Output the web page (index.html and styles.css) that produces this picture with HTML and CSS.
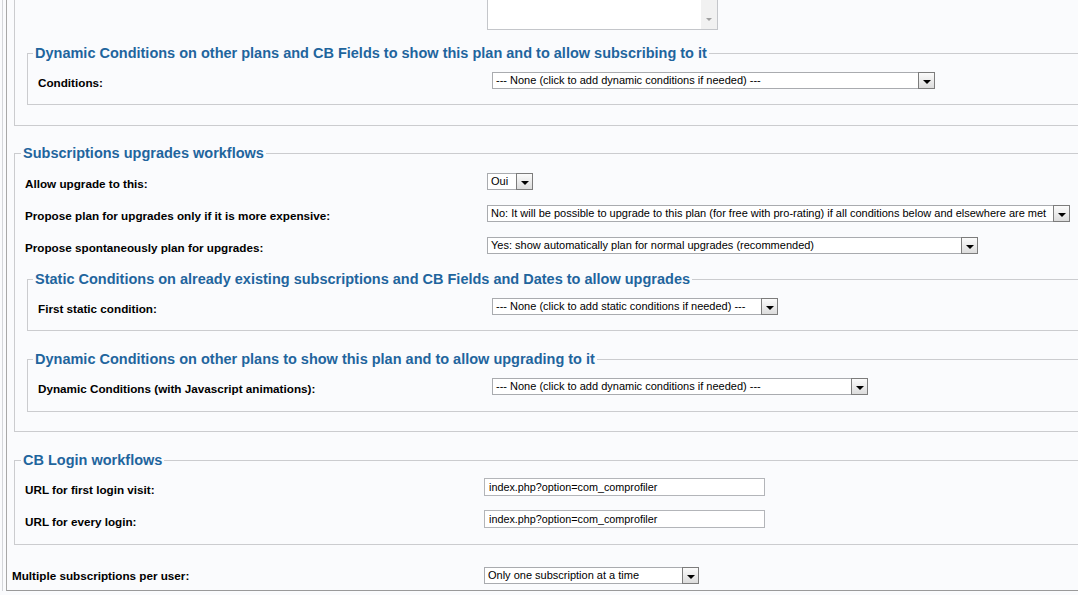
FILE: index.html
```html
<!DOCTYPE html>
<html>
<head>
<meta charset="utf-8">
<title>Plan settings</title>
<link rel="stylesheet" href="styles.css">
</head>
<body>
<div class="frame">
  <div class="panel">

    <fieldset class="fs fs-outer fs-cut">
      <div class="row row-outer row-ta">
        <div class="label"></div>
        <div class="ctrl">
          <div class="textarea"><span class="ta-scroll"><span class="ta-arrow"></span></span></div>
        </div>
      </div>
      <fieldset class="fs fs-inner fs-first">
        <legend>Dynamic Conditions on other plans and CB Fields to show this plan and to allow subscribing to it</legend>
        <div class="row row-inner">
          <label class="label">Conditions:</label>
          <div class="ctrl"><div class="select w-cond"><span class="val">--- None (click to add dynamic conditions if needed) ---</span><span class="btn"></span></div></div>
        </div>
      </fieldset>
    </fieldset>

    <fieldset class="fs fs-outer fs-upg">
      <legend>Subscriptions upgrades workflows</legend>
      <div class="rows">
        <div class="row row-outer">
          <label class="label">Allow upgrade to this:</label>
          <div class="ctrl"><div class="select w-oui"><span class="val">Oui</span><span class="btn"></span></div></div>
        </div>
        <div class="row row-outer">
          <label class="label">Propose plan for upgrades only if it is more expensive:</label>
          <div class="ctrl"><div class="select w-only"><span class="val">No: It will be possible to upgrade to this plan (for free with pro-rating) if all conditions below and elsewhere are met</span><span class="btn"></span></div></div>
        </div>
        <div class="row row-outer">
          <label class="label">Propose spontaneously plan for upgrades:</label>
          <div class="ctrl"><div class="select w-spont"><span class="val">Yes: show automatically plan for normal upgrades (recommended)</span><span class="btn"></span></div></div>
        </div>
      </div>
      <fieldset class="fs fs-inner">
        <legend>Static Conditions on already existing subscriptions and CB Fields and Dates to allow upgrades</legend>
        <div class="row row-inner">
          <label class="label">First static condition:</label>
          <div class="ctrl"><div class="select w-static"><span class="val">--- None (click to add static conditions if needed) ---</span><span class="btn"></span></div></div>
        </div>
      </fieldset>
      <fieldset class="fs fs-inner fs-second">
        <legend>Dynamic Conditions on other plans to show this plan and to allow upgrading to it</legend>
        <div class="row row-inner">
          <label class="label">Dynamic Conditions (with Javascript animations):</label>
          <div class="ctrl"><div class="select w-dyn"><span class="val">--- None (click to add dynamic conditions if needed) ---</span><span class="btn"></span></div></div>
        </div>
      </fieldset>
    </fieldset>

    <fieldset class="fs fs-outer fs-login">
      <legend>CB Login workflows</legend>
      <div class="rows">
        <div class="row row-login">
          <label class="label">URL for first login visit:</label>
          <div class="ctrl"><div class="input">index.php?option=com_comprofiler</div></div>
        </div>
        <div class="row row-login">
          <label class="label">URL for every login:</label>
          <div class="ctrl"><div class="input">index.php?option=com_comprofiler</div></div>
        </div>
      </div>
    </fieldset>

    <div class="row row-top">
      <label class="label">Multiple subscriptions per user:</label>
      <div class="ctrl"><div class="select w-multi"><span class="val">Only one subscription at a time</span><span class="btn"></span></div></div>
    </div>

  </div>
</div>
</body>
</html>
```

FILE: styles.css
```css
html, body {
  margin: 0;
  padding: 0;
  overflow: hidden;
  background: #fafbfd;
}
body {
  font-family: "Liberation Sans", Arial, sans-serif;
  color: #000;
}
.frame {
  margin-left: 2px;
  border-left: 1px solid #d4d6da;
  width: 1200px;
}
.panel {
  margin-left: 3px;
  border-left: 1px solid #a8a8a8;
  border-bottom: 1px solid #9a9a9a;
}
.fs {
  margin: 0;
  padding: 0;
  border: 1px solid #cbcccf;
  min-width: 0;
}
.fs legend {
  padding: 0 2px;
  margin-left: -4px;
  font-size: 14.5px;
  font-weight: bold;
  line-height: 16px;
  color: #1f659d;
}
.fs-inner legend {
  margin-left: -5px;
}
.fs-outer {
  margin-left: 7px;
  width: 1120px;
  padding: 0 0 20px 10px;
}
.fs-cut {
  border-top-width: 0;
}
.fs-upg {
  margin-top: 19px;
  padding-bottom: 19px;
}
.fs-login {
  margin-top: 20px;
  padding-bottom: 0;
}
.fs-inner {
  margin-left: 2px;
  padding: 5px 0 6px 10px;
}
.fs-first {
  margin-top: 15px;
}
.fs-second {
  margin-top: 20px;
  padding-bottom: 7px;
}
.rows {
  padding-top: 6px;
  padding-bottom: 8px;
}
.fs-login .rows {
  padding-top: 5px;
  padding-bottom: 7px;
}
.row {
  display: grid;
  align-items: center;
  height: 32px;
}
.row-outer { grid-template-columns: 462px auto; }
.row-inner { grid-template-columns: 454px auto; }
.row-login { grid-template-columns: 459px auto; }
.row-top {
  grid-template-columns: 472px auto;
  padding-left: 5px;
  margin-top: 15px;
  height: 30px;
}
.row-ta {
  height: 30px;
  align-items: end;
}
.label {
  font-size: 11.7px;
  font-weight: bold;
  white-space: nowrap;
}
.ctrl {
  display: flex;
}
.fs .row .ctrl {
  margin-bottom: 4px;
}
.fs .row-ta .ctrl {
  margin-bottom: 0;
}
.textarea {
  width: 229px;
  height: 29px;
  border: 1px solid #c4c6ca;
  border-top: 0;
  background: #fff;
  display: flex;
  justify-content: flex-end;
}
.ta-scroll {
  width: 16px;
  background: #f1f1f1;
  display: flex;
  align-items: flex-end;
  justify-content: center;
  padding-bottom: 8px;
}
.ta-arrow {
  width: 0;
  height: 0;
  border-left: 3px solid transparent;
  border-right: 3px solid transparent;
  border-top: 3px solid #a0a0a0;
}
.select {
  display: flex;
  height: 15px;
  border: 1px solid #a9abaf;
  background: #fff;
  font-size: 11px;
  line-height: 15px;
}
.select .val {
  flex: 1;
  padding-left: 3px;
  white-space: nowrap;
  overflow: hidden;
}
.select .btn {
  width: 15px;
  margin: -1px -1px -1px 0;
  border: 1px solid #7c7c7c;
  background: linear-gradient(#fbfbfb, #dcdcdc);
  display: flex;
  align-items: center;
  justify-content: center;
}
.select .btn::after {
  content: "";
  margin-top: 3px;
  border-left: 4px solid transparent;
  border-right: 4px solid transparent;
  border-top: 4px solid #000;
}
.w-cond { width: 441px; }
.w-oui { width: 44px; }
.w-only { width: 581px; }
.w-spont { width: 489px; }
.w-static { width: 284px; }
.w-dyn { width: 374px; }
.w-multi { width: 213px; }
.input {
  width: 275px;
  height: 16px;
  border: 1px solid #b3b5b9;
  background: #fff;
  font-size: 10.8px;
  line-height: 16px;
  padding-left: 4px;
  white-space: nowrap;
}
```
